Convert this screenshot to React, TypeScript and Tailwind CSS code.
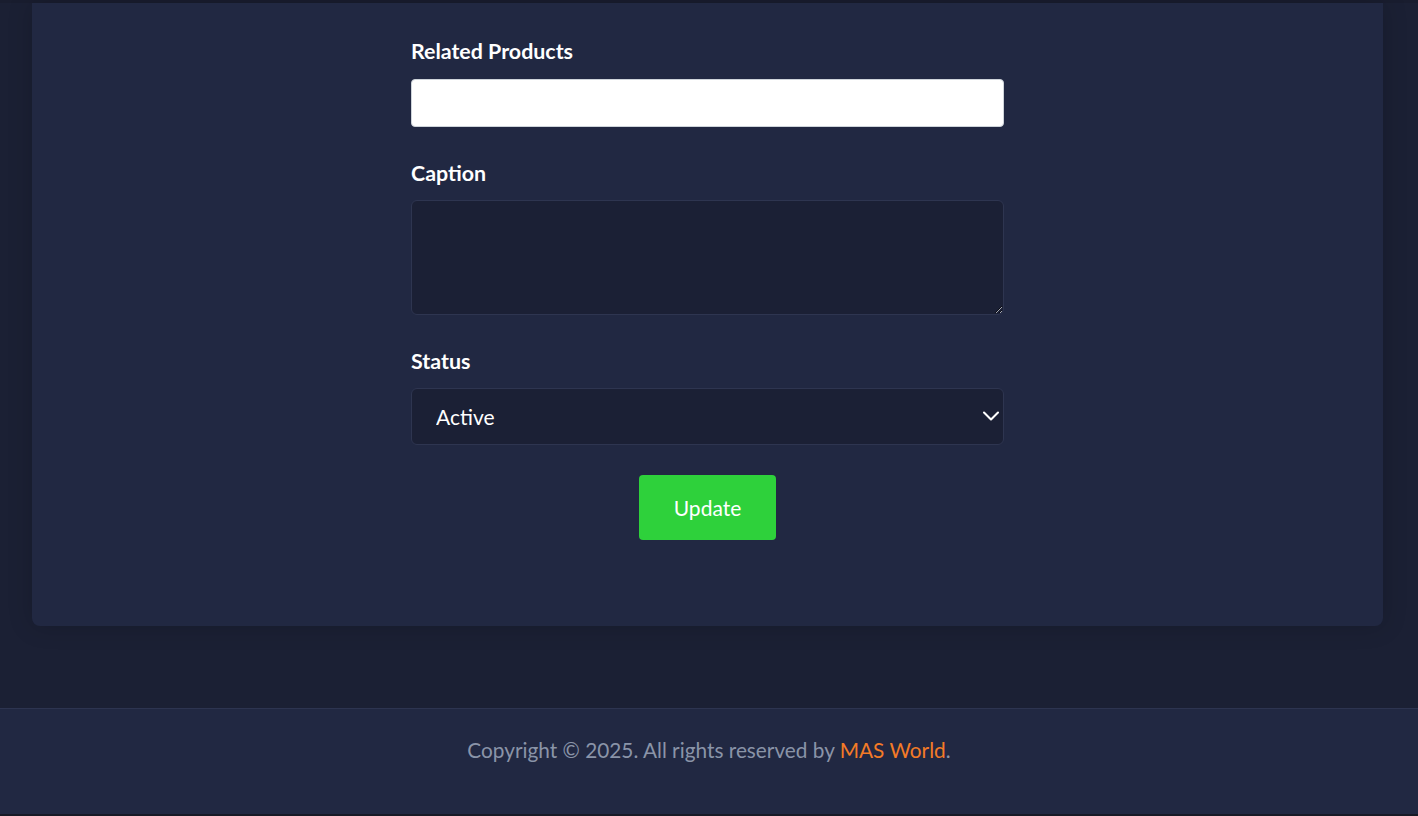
import { ChevronDown } from 'lucide-react';

// Edit post form (bottom part) + footer
export default function App() {
  return (
    <div className="min-h-[816px] bg-[#1b2034] flex flex-col" style={{ fontFamily: 'Lato, "Open Sans", sans-serif' }}>
      <div className="h-[3px] bg-[#191d2f]" />

      <main className="pl-[32px] pr-[35px] pb-[82px]">
        <div className="bg-[#212842] rounded-b-lg shadow-[0_0_24px_rgba(0,0,0,0.18)] pt-[36px] pb-[86px]">
          <form className="w-[593px] mx-auto" onSubmit={(e) => e.preventDefault()}>
            <label className="block text-[21.4px] leading-[24px] font-bold text-white mb-[16px]">Related Products</label>
            <input
              type="text"
              className="block w-full h-[48px] bg-white rounded-[4px] border border-[#ced4da] outline-none px-3"
            />

            <label className="block text-[21.4px] leading-[24px] font-bold text-white mt-[34px] mb-[15px]">Caption</label>
            <textarea className="block w-full h-[115px] bg-[#1b2035] border border-[#2e3550] rounded-[6px] outline-none text-white px-3 py-2" />

            <label className="block text-[21.4px] leading-[24px] font-bold text-white mt-[34px] mb-[15px]">Status</label>
            <div className="relative">
              <select className="appearance-none block w-full h-[57px] bg-[#1b2035] border border-[#2e3550] rounded-[6px] outline-none text-white text-[21px] pl-[24px]">
                <option>Active</option>
                <option>Inactive</option>
              </select>
              <ChevronDown className="absolute right-[-1px] top-[14px] w-[28px] h-[28px] text-white pointer-events-none" strokeWidth={1.8} />
            </div>

            <div className="flex justify-center mt-[30px]">
              <button className="w-[137px] h-[65px] bg-[#2ed13b] rounded-[4px] text-white text-[21px]">Update</button>
            </div>
          </form>
        </div>
      </main>

      <footer className="h-[106px] bg-[#212842] border-t border-[#2d3450] pt-[26px]">
        <p className="text-[20.8px] leading-[30px] text-[#8a94a8] text-center">
          Copyright © 2025. All rights reserved by <span className="text-[#f47b27]">MAS World</span>.
        </p>
      </footer>
      <div className="h-[2px] bg-[#171a26]" />
    </div>
  );
}
